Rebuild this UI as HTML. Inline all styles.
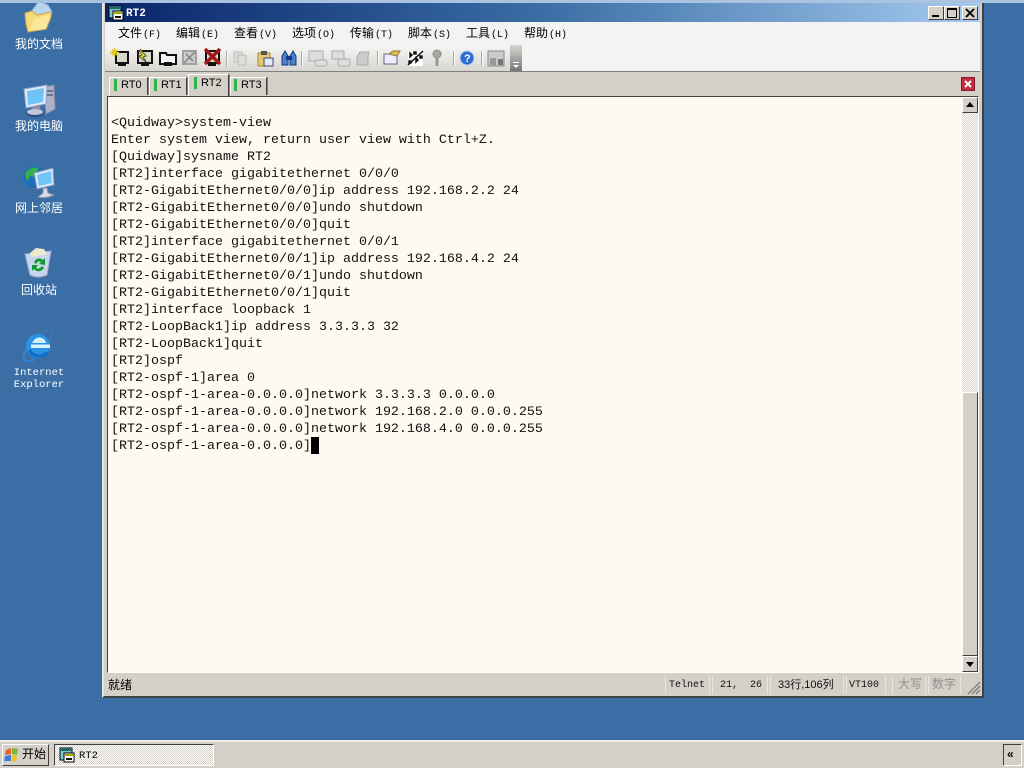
<!DOCTYPE html>
<html><head><meta charset="utf-8"><title>RT2</title>
<style>
html,body{margin:0;padding:0;width:1024px;height:768px;overflow:hidden;background:#3a6ea5}
body{position:relative;font-family:"Liberation Sans","WenQuanYi Zen Hei","Noto Sans CJK SC",sans-serif;font-size:12px;color:#000}
div,span,svg{position:absolute;box-sizing:border-box}
.t{white-space:pre;line-height:14px}
.ic{color:#fff;text-align:center;width:80px;left:-1px;line-height:14px;font-size:12px}
.m{top:26px;font-size:12px;line-height:14px;white-space:pre;color:#000}
.m small{font-family:"Liberation Mono",monospace;font-size:10px;margin-left:1px}
.tab{background:#d4d0c8;border-top:1px solid #fff;border-left:1px solid #fff;border-right:1px solid #404040;box-shadow:1px 0 0 #808080}
.bar{width:3px;height:12px;background:#2fb44a}
.tl{font-size:11px}
.sep{top:51px;width:2px;height:15px;border-left:1px solid #a8a8a8;border-right:1px solid #fff}
pre{position:absolute;margin:0;left:111px;top:115px;font-family:"Liberation Mono",monospace;font-size:13.33px;line-height:17px;color:#111}
.sb{top:679px;font-family:"Liberation Mono",monospace;font-size:10px;line-height:14px;white-space:pre;color:#111}
.cell{top:676px;height:18px;border-left:1px solid #e8e6e0;border-right:1px solid #e8e6e0}
.btn{background:#d4d0c8;border:1px solid;border-color:#fff #404040 #404040 #fff}
</style></head><body>
<div style="left:0;top:0;width:1024px;height:3px;background:#a9c3e0"></div>

<!-- desktop icons -->
<svg style="left:22px;top:0" width="32" height="33" viewBox="0 0 32 33"><path d="M9 12 L17 1 L26 5 L30 12 L24 20 L9 22Z" fill="#b8d4ee" stroke="#8fb0d4"/><path d="M3 13 L10 11 L15 15 L29 12 Q30 14 28 20 L24 29 L6 32 Q3 22 3 13Z" fill="#f6d97a" stroke="#c9a34a"/><path d="M7 31 L12 19 L29 14 L24 29Z" fill="#fbe89a"/></svg>
<div class="ic" style="top:37px">我的文档</div>

<svg style="left:22px;top:84px" width="34" height="35" viewBox="0 0 34 35"><path d="M22 3 L32 1 L33 25 L24 30Z" fill="#aeb2c8" stroke="#8a8ea8"/><rect x="25" y="6" width="6" height="2" fill="#6d7290"/><rect x="25" y="10" width="6" height="2" fill="#6d7290"/><path d="M2 5 L25 1 L24 20 L4 24Z" fill="#dfe8f6" stroke="#8ca0c8"/><path d="M5 7 L22 4 L21 18 L6 21Z" fill="#6fc3f5"/><path d="M10 23L18 22L19 27L9 28Z" fill="#8c90aa"/><ellipse cx="13" cy="29" rx="9" ry="4" fill="#2d4a8a"/><ellipse cx="13" cy="28" rx="8" ry="3" fill="#c4c8dc"/></svg>
<div class="ic" style="top:119px">我的电脑</div>

<svg style="left:22px;top:164px" width="34" height="36" viewBox="0 0 34 36"><circle cx="12" cy="13" r="11" fill="#1f6fb8"/><path d="M3 9 Q9 2 16 4 L14 13 L8 12 L5 18Z" fill="#36b04a"/><path d="M12 9 L31 4 L32 21 L15 25Z" fill="#dde8f8" stroke="#7f93c0"/><path d="M15 11 L29 7 L30 19 L17 22Z" fill="#70c5f7"/><path d="M21 24 L25 24 L26 29 L32 31 Q24 35 16 33 L21 29Z" fill="#d8d8e8" stroke="#8890b0"/></svg>
<div class="ic" style="top:201px">网上邻居</div>

<svg style="left:24px;top:248px" width="28" height="30" viewBox="0 0 28 30"><path d="M1 6 L27 3 L23 27 Q14 31 6 27Z" fill="#c9d5ec" stroke="#9aa9cc"/><path d="M6 5 L12 0 L20 1 L23 6 L8 9Z" fill="#efe9cc"/><path d="M10 14Q14 8 19 12L21 10L21 17L15 16L17 14Q14 12 12 16ZM20 20Q15 26 10 21L8 23L8 17L14 17L12 20Q15 22 18 18Z" fill="#109a2c"/></svg>
<div class="ic" style="top:283px">回收站</div>

<svg style="left:22px;top:329px" width="32" height="34" viewBox="0 0 32 34"><path d="M20 5 Q30 -1 31 4 Q31 9 25 14" fill="none" stroke="#3f78bc" stroke-width="1.500"/><path d="M3 32 Q-1 28 7 15" fill="none" stroke="#2f86da" stroke-width="2"/><path d="M4 32 Q8 33 13 30" fill="none" stroke="#2f86da" stroke-width="2"/><circle cx="16" cy="17" r="12" fill="#2c93e4"/><path d="M10 14 Q13 8 18 8.500 Q23 9 24 14Z" fill="#d4effd"/><rect x="9" y="15.500" width="19" height="3.500" fill="#d8f0fe"/><path d="M9 20 Q12 26 18 25.500 L27 22 L25 27 Q12 32 6 22Z" fill="#0f6dc8"/></svg>
<div class="ic" style="top:367px;font-family:'Liberation Mono',monospace;font-size:10.5px;line-height:12px">Internet<br>Explorer</div>

<!-- window -->
<div style="left:102px;top:3px;width:882px;height:695px;background:#d4d0c8;border-right:2px solid #404040;border-bottom:2px solid #404040;border-left:2px solid #e8e6e0"></div>
<div style="left:105px;top:3px;width:875px;height:19px;background:linear-gradient(90deg,#0a246a 0%,#3a6ea5 50%,#a6caf0 100%)"></div>
<svg style="left:108px;top:5px" width="16" height="16" viewBox="0 0 16 16"><rect x="1" y="1" width="12" height="12" fill="#7cc" stroke="#000"/><rect x="1" y="1" width="12" height="3" fill="#266"/><rect x="5" y="6" width="10" height="9" fill="#fff" stroke="#000"/><rect x="6" y="7" width="8" height="2" fill="#aa0"/><rect x="7" y="11" width="6" height="2" fill="#111"/></svg>
<div class="t" style="left:126px;top:7px;color:#fff;font-family:'Liberation Mono',monospace;font-weight:bold;font-size:11px">RT2</div>
<div class="btn" style="left:928px;top:6px;width:16px;height:14px"><div style="left:3px;top:8px;width:7px;height:2px;background:#000"></div></div>
<div class="btn" style="left:944px;top:6px;width:16px;height:14px"><div style="left:2px;top:1px;width:10px;height:10px;border:1px solid #000;border-top-width:2px"></div></div>
<div class="btn" style="left:962px;top:6px;width:16px;height:14px"><svg style="left:2px;top:1px" width="10" height="10" viewBox="0 0 10 10"><path d="M1 1L9 9M9 1L1 9" stroke="#000" stroke-width="1.800"/></svg></div>

<!-- menu -->
<div style="left:105px;top:22px;width:875px;height:23px;background:#f3f3f3"></div>
<div class="m" style="left:118px">文件<small>(F)</small></div>
<div class="m" style="left:176px">编辑<small>(E)</small></div>
<div class="m" style="left:234px">查看<small>(V)</small></div>
<div class="m" style="left:292px">选项<small>(O)</small></div>
<div class="m" style="left:350px">传输<small>(T)</small></div>
<div class="m" style="left:408px">脚本<small>(S)</small></div>
<div class="m" style="left:466px">工具<small>(L)</small></div>
<div class="m" style="left:524px">帮助<small>(H)</small></div>

<!-- toolbar -->
<div style="left:105px;top:45px;width:875px;height:27px;background:#f3f3f3;border-bottom:1px solid #808080"></div>
<div style="left:105px;top:45px;width:417px;height:27px;background:linear-gradient(#f6f6f4,#d8d6d0);border-bottom:1px solid #808080"></div>
<div style="left:510px;top:45px;width:12px;height:26px;background:linear-gradient(#d8d6d0,#777)"></div>
<svg style="left:512px;top:62px" width="8" height="8" viewBox="0 0 8 8"><rect x="1" y="0" width="6" height="1" fill="#fff"/><path d="M1 3H7L4 6Z" fill="#fff"/></svg>
<svg style="left:110px;top:48px" width="410" height="20" viewBox="0 0 410 20">
<g fill="none" stroke="#111" stroke-width="2">
<rect x="6" y="4" width="12" height="11" fill="#d8d8c8"/><rect x="28" y="3" width="14" height="12" fill="#d8d8c8"/>
<path d="M50 5h6l1 2h9v9H50Z" fill="#f4f4f4"/>
<rect x="96" y="3" width="13" height="12" fill="#d8d8c8"/></g>
<path d="M2 2l5 5M7 2l-5 5M4.500 0v9M0 4.500h9" stroke="#d8c820" stroke-width="1.500"/>
<path d="M30 1l6 7-3 1 4 6-8-7 3-1-3-5" fill="#ee3" stroke="#553"/>
<rect x="8" y="14" width="8" height="4" fill="#111"/><rect x="31" y="14" width="8" height="4" fill="#111"/><rect x="54" y="14" width="8" height="4" fill="#111"/><rect x="98" y="14" width="8" height="4" fill="#111"/>
<g fill="#ccc" stroke="#a0a0a0" stroke-width="2"><rect x="73" y="3" width="13" height="13"/></g><path d="M74 15L85 4M76 6l7 7" stroke="#808080" stroke-width="1.500"/>
<path d="M95 1L110 16M110 1L95 16" stroke="#a01818" stroke-width="3.500"/>
<g fill="#ddd" stroke="#bbb"><rect x="124" y="4" width="8" height="10"/><rect x="128" y="7" width="8" height="10"/></g>
<rect x="148" y="5" width="12" height="13" fill="#e8c96a" stroke="#a58a3a"/><rect x="151" y="3" width="6" height="4" fill="#555"/><rect x="154" y="10" width="9" height="8" fill="#dfe8f5" stroke="#446"/>
<path d="M172 8l3-5 3 5v9h-6ZM180 8l3-5 3 5v9h-6Z" fill="#4f7fc8" stroke="#123a88"/><rect x="176" y="8" width="6" height="4" fill="#123a88"/>
<g fill="#ddd" stroke="#aaa"><rect x="199" y="3" width="14" height="10"/><rect x="205" y="12" width="12" height="6" rx="2"/><rect x="222" y="3" width="12" height="8"/><rect x="228" y="11" width="12" height="7" rx="2"/><path d="M247 9l3-5h9l-1 5v8h-11Z" fill="#ccc"/></g>
<rect x="274" y="6" width="13" height="10" fill="#eef" stroke="#668"/><path d="M279 6l4-3 7 0-3 5Z" fill="#e8c040" stroke="#875"/>
<rect x="298" y="3" width="15" height="15" fill="#fff"/><path d="M298 17L313 3M300 5l2 2-2 2zM306 10l2 2-2 2zM304 4h2v2h-2zM310 8h2v2h-2zM299 13h2v2h-2z" stroke="#111" stroke-width="1.500" fill="#111"/>
<circle cx="327" cy="6" r="4" fill="#a8a8a0" stroke="#888"/><rect x="325.500" y="9" width="3" height="9" fill="#999"/>
<circle cx="357" cy="10" r="7" fill="#2c6fd0" stroke="#b8c8e8"/><text x="354" y="14" font-family="Liberation Sans" font-size="11" font-weight="bold" fill="#fff">?</text>
<rect x="378" y="3" width="16" height="15" fill="#ccc" stroke="#888"/><rect x="380" y="10" width="6" height="7" fill="#999"/><rect x="388" y="11" width="5" height="6" fill="#777"/>
</svg>
<div class="sep" style="left:226px"></div><div class="sep" style="left:301px"></div><div class="sep" style="left:377px"></div><div class="sep" style="left:453px"></div><div class="sep" style="left:481px"></div>

<!-- tab row -->
<div style="left:105px;top:72px;width:875px;height:24px;background:#d4d0c8"></div>
<div class="tab" style="left:109px;top:77px;width:39px;height:18px"></div><div class="t tl" style="left:121px;top:78px">RT0</div><div class="bar" style="left:114px;top:79px"></div>
<div class="tab" style="left:149px;top:77px;width:38px;height:18px"></div><div class="t tl" style="left:161px;top:78px">RT1</div><div class="bar" style="left:154px;top:79px"></div>
<div class="tab" style="left:188px;top:74px;width:41px;height:22px;z-index:2"></div><div class="t tl" style="left:201px;top:76px;z-index:3">RT2</div><div class="bar" style="left:194px;top:77px;z-index:3"></div>
<div class="tab" style="left:230px;top:77px;width:37px;height:18px"></div><div class="t tl" style="left:241px;top:78px">RT3</div><div class="bar" style="left:234px;top:79px"></div>
<div style="left:961px;top:77px;width:14px;height:14px;background:#c42b3c;border:1px solid #8a1822"><svg style="left:2px;top:2px" width="8" height="8" viewBox="0 0 8 8"><path d="M1 1L7 7M7 1L1 7" stroke="#fff" stroke-width="2"/></svg></div>

<!-- terminal -->
<div style="left:107px;top:96px;width:872px;height:577px;background:#fffaf0;border:1px solid;border-color:#404040 #fff #fff #404040"></div>
<pre>&lt;Quidway&gt;system-view
Enter system view, return user view with Ctrl+Z.
[Quidway]sysname RT2
[RT2]interface gigabitethernet 0/0/0
[RT2-GigabitEthernet0/0/0]ip address 192.168.2.2 24
[RT2-GigabitEthernet0/0/0]undo shutdown
[RT2-GigabitEthernet0/0/0]quit
[RT2]interface gigabitethernet 0/0/1
[RT2-GigabitEthernet0/0/1]ip address 192.168.4.2 24
[RT2-GigabitEthernet0/0/1]undo shutdown
[RT2-GigabitEthernet0/0/1]quit
[RT2]interface loopback 1
[RT2-LoopBack1]ip address 3.3.3.3 32
[RT2-LoopBack1]quit
[RT2]ospf
[RT2-ospf-1]area 0
[RT2-ospf-1-area-0.0.0.0]network 3.3.3.3 0.0.0.0
[RT2-ospf-1-area-0.0.0.0]network 192.168.2.0 0.0.0.255
[RT2-ospf-1-area-0.0.0.0]network 192.168.4.0 0.0.0.255
[RT2-ospf-1-area-0.0.0.0]</pre>
<div style="left:311px;top:437px;width:8px;height:17px;background:#000"></div>

<!-- scrollbar -->
<div style="left:962px;top:113px;width:16px;height:279px;background:repeating-conic-gradient(#fff 0 25%,#d4d0c8 0 50%) 0 0/2px 2px"></div>
<div class="btn" style="left:962px;top:97px;width:16px;height:16px"><div style="left:3px;top:4px;width:0;height:0;border:4px solid transparent;border-bottom:5px solid #000;border-top:0"></div></div>
<div class="btn" style="left:962px;top:392px;width:16px;height:264px"></div>
<div class="btn" style="left:962px;top:656px;width:16px;height:16px"><div style="left:3px;top:5px;width:0;height:0;border:4px solid transparent;border-top:5px solid #000;border-bottom:0"></div></div>

<!-- status bar -->
<div class="t" style="left:108px;top:678px;font-size:12px">就绪</div>
<div class="cell" style="left:665px;width:45px"></div><div class="sb" style="left:669px">Telnet</div>
<div class="cell" style="left:712px;width:56px"></div><div class="sb" style="left:720px">21,&nbsp;&nbsp;26</div>
<div class="cell" style="left:770px;width:74px"></div><div class="sb" style="left:778px;top:678px;font-family:'Liberation Sans','WenQuanYi Zen Hei',sans-serif;font-size:11px">33行,106列</div>
<div class="cell" style="left:846px;width:40px"></div><div class="sb" style="left:849px">VT100</div>
<div class="cell" style="left:892px;width:34px"></div><div class="t" style="left:898px;top:677px;color:#909090">大写</div>
<div class="cell" style="left:928px;width:33px"></div><div class="t" style="left:932px;top:677px;color:#909090">数字</div>
<svg style="left:967px;top:681px" width="14" height="14" viewBox="0 0 14 14"><path d="M13 1L1 13M13 5L5 13M13 9L9 13" stroke="#808080" stroke-width="1.500"/></svg>

<!-- taskbar -->
<div style="left:0;top:740px;width:1024px;height:28px;background:#d4d0c8;border-top:2px solid #f0efeb"></div>
<div class="btn" style="left:2px;top:744px;width:47px;height:22px"></div>
<svg style="left:4px;top:747px" width="16" height="16" viewBox="0 0 16 16"><path d="M2 3L7 1V7L1 8Z" fill="#e8602c"/><path d="M8 1L14 2L13 8L8 7Z" fill="#7ab83c"/><path d="M1 9L7 8V14L0 14Z" fill="#3a7ee0"/><path d="M8 8L13 9L12 15L8 14Z" fill="#f4c020"/></svg>
<div class="t" style="left:22px;top:747px;font-size:12px">开始</div>
<div style="left:54px;top:744px;width:160px;height:22px;background:repeating-conic-gradient(#fff 0 25%,#d4d0c8 0 50%) 0 0/2px 2px;border:1px solid;border-color:#404040 #fff #fff #404040"></div>
<svg style="left:59px;top:747px" width="16" height="16" viewBox="0 0 16 16"><rect x="1" y="1" width="12" height="12" fill="#7cc" stroke="#000"/><rect x="1" y="1" width="12" height="3" fill="#266"/><rect x="5" y="6" width="10" height="9" fill="#fff" stroke="#000"/><rect x="6" y="7" width="8" height="2" fill="#aa0"/><rect x="7" y="11" width="6" height="2" fill="#111"/></svg>
<div class="t" style="left:79px;top:749px;font-family:'Liberation Mono',monospace;font-size:10.500px">RT2</div>
<div style="left:1003px;top:744px;width:19px;height:22px;border:1px solid;border-color:#404040 #fff #fff #404040"></div>
<div class="t" style="left:1007px;top:747px;font-weight:bold;font-size:12px">«</div>
</body></html>
